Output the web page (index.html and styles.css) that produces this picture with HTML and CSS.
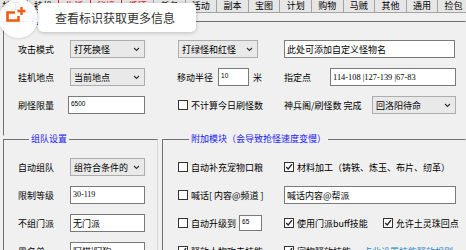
FILE: index.html
```html
<!DOCTYPE html>
<html lang="zh-CN">
<head>
    <meta charset="UTF-8">
    <title>挂机设置</title>
    <link rel="stylesheet" href="styles.css">
</head>
<body>
    <!-- 顶部标签页 -->
    <div class="tabs">
        <span class="tab">护卫</span>
        <span class="tab">挂机</span>
        <span class="tab tab-red">生活</span>
        <span class="tab tab-red">秘境</span>
        <span class="tab tab-red">循环</span>
        <span class="tab">任务</span>
        <span class="tab">活动</span>
        <span class="tab">副本</span>
        <span class="tab">宝图</span>
        <span class="tab">计划</span>
        <span class="tab">购物</span>
        <span class="tab">马贼</span>
        <span class="tab">其他</span>
        <span class="tab">通用</span>
        <span class="tab">捡包</span>
    </div>

    <!-- 挂机设置 -->
    <fieldset class="group group-main">
        <legend>挂机设置</legend>
        <div class="main-grid">
            <div class="cell">
                <span class="label">攻击模式</span>
                <div class="combo w75"><span>打死换怪</span><svg width="7" height="5" viewBox="0 0 7 5"><path d="M1 1l2.5 2.5L6 1" fill="none" stroke="#333" stroke-width="1.1"/></svg></div>
            </div>
            <div class="cell">
                <div class="combo w80 ml1"><span>打绿怪和红怪</span><svg width="7" height="5" viewBox="0 0 7 5"><path d="M1 1l2.5 2.5L6 1" fill="none" stroke="#333" stroke-width="1.1"/></svg></div>
            </div>
            <div class="cell">
                <input class="field w171" type="text" value="此处可添加自定义怪物名">
            </div>

            <div class="cell">
                <span class="label">挂机地点</span>
                <div class="combo w75"><span>当前地点</span><svg width="7" height="5" viewBox="0 0 7 5"><path d="M1 1l2.5 2.5L6 1" fill="none" stroke="#333" stroke-width="1.1"/></svg></div>
            </div>
            <div class="cell">
                <span class="label-auto">移动半径</span>
                <input class="field num w31 ml5" type="text" value="10">
                <span class="ml4">米</span>
            </div>
            <div class="cell">
                <span class="label label-46">指定点</span>
                <input class="field serif w126" type="text" value="114-108 |127-139 |67-83">
            </div>

            <div class="cell">
                <span class="label label-50">刷怪限量</span>
                <input class="field num w77" type="text" value="6500">
            </div>
            <div class="cell">
                <label class="check ml1"><span class="box"></span>不计算今日刷怪数</label>
            </div>
            <div class="cell between">
                <span>神兵阁/刷怪数 完成</span>
                <div class="combo w84"><span>回洛阳待命</span><svg width="7" height="5" viewBox="0 0 7 5"><path d="M1 1l2.5 2.5L6 1" fill="none" stroke="#333" stroke-width="1.1"/></svg></div>
            </div>
        </div>
    </fieldset>

    <div class="groups">
        <!-- 组队设置 -->
        <fieldset class="group group-team">
            <legend>组队设置</legend>
            <div class="rows">
                <div class="cell">
                    <span class="label">自动组队</span>
                    <div class="combo w75"><span>组符合条件的</span><svg width="7" height="5" viewBox="0 0 7 5"><path d="M1 1l2.5 2.5L6 1" fill="none" stroke="#333" stroke-width="1.1"/></svg></div>
                </div>
                <div class="cell">
                    <span class="label">限制等级</span>
                    <input class="field serif-s w75" type="text" value="30-119">
                </div>
                <div class="cell">
                    <span class="label">不组门派</span>
                    <input class="field w75" type="text" value="无门派">
                </div>
                <div class="cell">
                    <span class="label">黑名单</span>
                    <input class="field w75" type="text" value="阿猫|阿狗">
                </div>
            </div>
        </fieldset>

        <!-- 附加模块 -->
        <fieldset class="group group-extra">
            <legend>附加模块（会导致抢怪速度变慢）</legend>
            <div class="extra-grid">
                <div class="cell">
                    <label class="check"><span class="box"></span>自动补充宠物口粮</label>
                </div>
                <div class="cell">
                    <label class="check"><span class="box"><svg width="8" height="8" viewBox="0 0 8 8"><path d="M1.2 4l2 2 3.8-4.8" fill="none" stroke="#222" stroke-width="1.3"/></svg></span>材料加工（铸铁、炼玉、布片、纫革）</label>
                </div>

                <div class="cell">
                    <label class="check"><span class="box"></span>喊话[ 内容@频道 ]</label>
                </div>
                <div class="cell">
                    <input class="field w172" type="text" value="喊话内容@帮派">
                </div>

                <div class="cell">
                    <label class="check"><span class="box"></span>自动升级到</label>
                    <input class="field num small w23 ml3" type="text" value="65">
                </div>
                <div class="cell gap15">
                    <label class="check"><span class="box"><svg width="8" height="8" viewBox="0 0 8 8"><path d="M1.2 4l2 2 3.8-4.8" fill="none" stroke="#222" stroke-width="1.3"/></svg></span>使用门派buff技能</label>
                    <label class="check"><span class="box"><svg width="8" height="8" viewBox="0 0 8 8"><path d="M1.2 4l2 2 3.8-4.8" fill="none" stroke="#222" stroke-width="1.3"/></svg></span>允许土灵珠回点</label>
                </div>

                <div class="cell">
                    <label class="check"><span class="box"><svg width="8" height="8" viewBox="0 0 8 8"><path d="M1.2 4l2 2 3.8-4.8" fill="none" stroke="#222" stroke-width="1.3"/></svg></span>释放人物攻击技能</label>
                </div>
                <div class="cell gap12">
                    <label class="check"><span class="box"><svg width="8" height="8" viewBox="0 0 8 8"><path d="M1.2 4l2 2 3.8-4.8" fill="none" stroke="#222" stroke-width="1.3"/></svg></span>宠物释放技能</label>
                    <a class="link" href="#">点此设置技能释放规则</a>
                </div>
            </div>
        </fieldset>
    </div>

    <!-- 提示浮层 -->
    <div class="tip">
        <div class="tip-icon">
            <svg width="39" height="39" viewBox="0 0 39 39">
                <path d="M16 13.5H8.5V21.5H19.5V17" fill="none" stroke="#f05a12" stroke-width="2.6"/>
                <path d="M22.5 8v8M18.5 12h8" fill="none" stroke="#f05a12" stroke-width="2.4"/>
            </svg>
        </div>
        <div class="tip-box">查看标识获取更多信息</div>
    </div>
</body>
</html>
```

FILE: styles.css
```css
/* 基本样式 */
body {
    margin: 0;
    width: 466px;
    height: 250px;
    overflow: hidden;
    position: relative;
    background-color: #f0f0f0;
    color: #000000;
    font-family: "Noto Sans CJK SC", sans-serif;
    font-size: 9px;
}

/* 标签页 */
.tabs {
    display: flex;
    height: 16px;
    margin: -3px 0 0 -5px;
    white-space: nowrap;
    overflow: hidden;
}

.tab {
    flex: none;
    width: 32.6px;
    margin-right: -1px;
    box-sizing: border-box;
    border: 1px solid #a3a3a3;
    background-color: #e6e6e6;
    line-height: 15px;
    text-align: center;
}

.tab-red {
    border-color: #e02020;
    color: #e02020;
}

/* 分组框 */
.group {
    margin: 0;
    padding: 0;
    border: 1px solid #707070;
    min-width: 0;
}

.group legend {
    padding: 0 2px;
    margin-left: 11px;
    line-height: 12px;
    color: #1a1af0;
}

.group-main {
    margin: 2px 0 0 3px;
    width: 463px;
    box-sizing: border-box;
    padding: 13px 0 21px 14px;
    border-right-color: transparent;
    border-bottom-color: transparent;
}

.groups {
    display: flex;
    margin-top: -3px;
}

.group-team {
    margin-left: 3px;
    width: 155px;
    box-sizing: border-box;
    padding: 13px 0 0 14px;
    border-right-color: #d8d8d8;
}

.group-extra {
    margin-left: 4px;
    width: 304px;
    box-sizing: border-box;
    padding: 13px 0 0 15px;
    border-right-color: transparent;
}

/* 表格布局 */
.main-grid {
    display: grid;
    grid-template-columns: 159px 107px 172px;
    row-gap: 10px;
}

.rows {
    display: grid;
    row-gap: 10px;
}

.extra-grid {
    display: grid;
    grid-template-columns: 106px 182px;
    row-gap: 10px;
}

.cell {
    display: flex;
    align-items: center;
    height: 18px;
    white-space: nowrap;
}

.between {
    justify-content: space-between;
}

.gap15 {
    gap: 15px;
}

.gap12 {
    gap: 12px;
}

.label {
    width: 52px;
    flex: none;
}

.label-50 {
    width: 50px;
}

.label-46 {
    width: 46px;
}

/* 下拉框 */
.combo {
    display: flex;
    align-items: center;
    justify-content: space-between;
    height: 18px;
    box-sizing: border-box;
    padding: 0 4px 0 3px;
    border: 1px solid #adadad;
    background-color: #e9e9e9;
}

.combo span {
    padding-top: 1px;
}

/* 输入框 */
.field {
    height: 18px;
    box-sizing: border-box;
    margin: 0;
    padding: 0 2px;
    border: 1px solid #7a7a7a;
    background-color: #ffffff;
    font-family: "Noto Sans CJK SC", sans-serif;
    font-size: 9px;
    color: #000000;
    outline: none;
}

.num {
    font-family: "Liberation Sans", sans-serif;
    font-size: 6.5px;
    padding-bottom: 4px;
}

.serif {
    font-family: "Liberation Serif", serif;
    font-size: 8.4px;
}

.serif-s {
    font-family: "Liberation Serif", serif;
    font-size: 8px;
    padding-bottom: 2px;
}

.small {
    height: 16px;
}

.w23 { width: 23px; }
.w31 { width: 31px; }
.w75 { width: 75px; }
.w77 { width: 77px; }
.w80 { width: 80px; }
.w84 { width: 84px; }
.w126 { width: 126px; }
.w171 { width: 171px; }
.w172 { width: 172px; }

.ml1 { margin-left: 1px; }
.ml3 { margin-left: 3px; }
.ml4 { margin-left: 4px; }
.ml5 { margin-left: 5px; }

/* 复选框 */
.check {
    display: flex;
    align-items: center;
}

.box {
    display: flex;
    align-items: center;
    justify-content: center;
    width: 8px;
    height: 8px;
    margin-right: 3px;
    border: 1px solid #333333;
    background-color: #ffffff;
}

.link {
    color: #1f86c4;
    text-decoration: none;
}

/* 提示浮层 */
.tip {
    position: absolute;
    left: -1px;
    top: -1px;
}

.tip-icon {
    position: absolute;
    left: 0;
    top: 0;
    z-index: 2;
    width: 39px;
    height: 39px;
    border-radius: 50%;
    background-color: rgba(255, 255, 255, 0.9);
    box-shadow: 0 0 3px rgba(0, 0, 0, 0.25);
}

.tip-box {
    position: absolute;
    left: 39px;
    top: 4px;
    width: 158px;
    height: 29px;
    box-sizing: border-box;
    padding-left: 17px;
    border-radius: 5px;
    background-color: #ffffff;
    box-shadow: 0 1px 4px rgba(0, 0, 0, 0.22);
    color: #333333;
    font-size: 12px;
    line-height: 29px;
    white-space: nowrap;
}
```
